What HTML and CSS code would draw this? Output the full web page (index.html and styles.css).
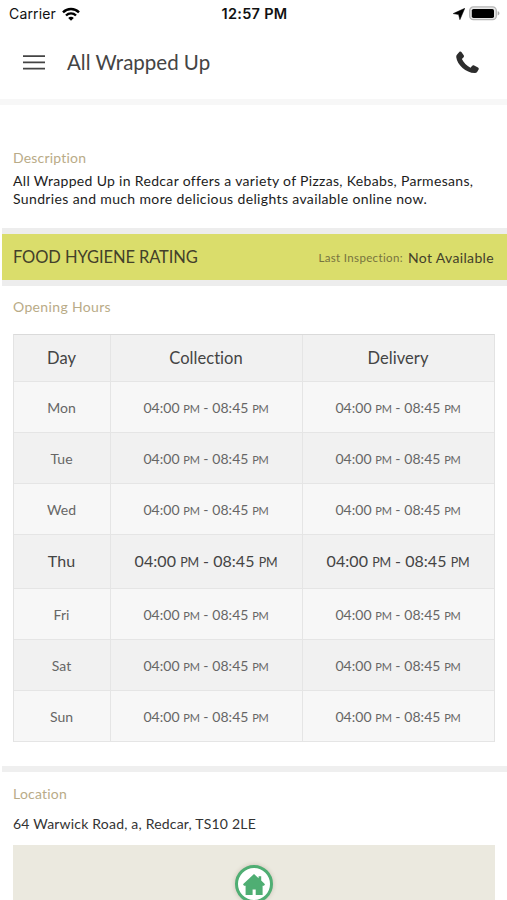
FILE: index.html
```html
<!DOCTYPE html>
<html lang="en">
<head>
<meta charset="utf-8">
<title>All Wrapped Up</title>
<link rel="stylesheet" href="styles.css">
</head>
<body>
<div class="status">
  <div class="carrier"><span>Carrier</span>
    <svg width="18" height="14" viewBox="0 0 18 14" fill="none" stroke="#000" stroke-width="2.4"><path d="M1 5.400C5.400.9 12.600.9 17 5.400M4 8.500c2.800-2.800 7.200-2.800 10 0"/><path d="M9 13.700 6.200 10.900c1.500-1.500 4.100-1.500 5.600 0z" fill="#000" stroke="none"/></svg>
  </div>
  <div class="clock">12:57 PM</div>
  <div class="indicators">
    <svg width="12" height="12" viewBox="0 0 12 12"><path d="M11.800.3 6.900 11.700 5.600 6.600.2 5.600z" stroke="#000" stroke-width=".5"/></svg>
    <svg width="31" height="15" viewBox="0 0 31 15"><rect x=".7" y=".9" width="26.600" height="12.800" rx="3.700" fill="#e8e8e8" stroke="#b5b5b5" stroke-width="1.300"/><rect x="2.800" y="2.900" width="22.200" height="9" rx="1.700"/><path d="M28.700 5.300c2.300.7 2.300 3.500 0 4.200z" fill="#aaa"/></svg>
  </div>
</div>
<header class="bar">
  <svg width="22" height="15" viewBox="0 0 22 15" stroke="#444" stroke-width="1.700"><path d="M0 1.200h22M0 7.400h22M0 13.600h22"/></svg>
  <h1>All Wrapped Up</h1>
  <svg class="phone" width="23" height="23" viewBox="0 0 23 23" fill="#2d2d2d"><path d="M1.300 3.200 3.500.8c.6-.6 1.400-.5 1.900.1l2.300 3.300c.5.700.4 1.500-.1 2.100L5.900 8.100c1.600 3.500 4.800 6.800 8.600 8.600l1.700-2c.5-.6 1.300-.7 2-.3l3.800 2c.8.5 1 1.200.6 2l-1.500 2.600c-.5.800-1.400 1.200-2.400 1.100C9.900 21.400 1.300 14.200.2 5.900.1 4.900.5 4 1.300 3.200z"/></svg>
</header>
<main>
  <section class="description">
    <h2>Description</h2>
    <p><span class="l1">All Wrapped Up in Redcar offers a variety of Pizzas, Kebabs, Parmesans,</span><br><span class="l2">Sundries and much more delicious delights available online now.</span></p>
  </section>
  <section class="hygiene">
    <span class="title">FOOD HYGIENE RATING</span>
    <span class="label">Last Inspection:</span>
    <span class="value">Not Available</span>
  </section>
  <section class="opening">
    <h2>Opening Hours</h2>
    <div class="hours">
      <div class="row head"><div>Day</div><div>Collection</div><div>Delivery</div></div>
      <div class="row"><div>Mon</div><div>04:00 <small>PM</small> - 08:45 <small>PM</small></div><div>04:00 <small>PM</small> - 08:45 <small>PM</small></div></div>
      <div class="row alt"><div>Tue</div><div>04:00 <small>PM</small> - 08:45 <small>PM</small></div><div>04:00 <small>PM</small> - 08:45 <small>PM</small></div></div>
      <div class="row"><div>Wed</div><div>04:00 <small>PM</small> - 08:45 <small>PM</small></div><div>04:00 <small>PM</small> - 08:45 <small>PM</small></div></div>
      <div class="row alt today"><div>Thu</div><div>04:00 <small>PM</small> - 08:45 <small>PM</small></div><div>04:00 <small>PM</small> - 08:45 <small>PM</small></div></div>
      <div class="row"><div>Fri</div><div>04:00 <small>PM</small> - 08:45 <small>PM</small></div><div>04:00 <small>PM</small> - 08:45 <small>PM</small></div></div>
      <div class="row alt"><div>Sat</div><div>04:00 <small>PM</small> - 08:45 <small>PM</small></div><div>04:00 <small>PM</small> - 08:45 <small>PM</small></div></div>
      <div class="row"><div>Sun</div><div>04:00 <small>PM</small> - 08:45 <small>PM</small></div><div>04:00 <small>PM</small> - 08:45 <small>PM</small></div></div>
    </div>
  </section>
  <section class="location">
    <h2>Location</h2>
    <address>64 Warwick Road, a, Redcar, TS10 2LE</address>
    <div class="map">
      <div class="pin"><svg width="22" height="21" viewBox="0 0 22 21" fill="#4fae73"><path d="M11 0 15.600 4.200V2.200h2.600v4.400L22 10.300 21 11.800H19.600V21h-6.900v-5.500H9.600V21H2.600v-9.200H1L0 10.300z"/></svg></div>
    </div>
  </section>
</main>
</body>
</html>
```

FILE: styles.css
```css
* { box-sizing: border-box; }
body {
  margin: 0;
  height: 900px;
  overflow: hidden;
  background: #fff;
  color: #222;
  font-family: Lato, "Liberation Sans", sans-serif;
  font-size: 14px;
}
h1, h2, p { margin: 0; font-weight: 400; }
svg { display: block; flex: none; }

.status {
  display: grid;
  grid-template-columns: 1fr auto 1fr;
  align-items: center;
  height: 27px;
  padding: 0 7px 0 9px;
  color: #111;
  font-family: Inter, sans-serif;
  font-size: 14px;
}
.carrier { display: flex; align-items: center; gap: 6px; letter-spacing: 0.15px; }
.clock { font-weight: 600; font-size: 14.5px; letter-spacing: 0.3px; }
.indicators { display: flex; justify-content: flex-end; align-items: center; gap: 4px; }

.bar {
  display: flex;
  align-items: center;
  height: 78px;
  padding: 0 28px 2px 23px;
  border: solid transparent;
  border-width: 0 0 6px;
  border-image: linear-gradient(to right, #fff 2px, #f7f7f7 2px) 6;
}
.bar h1 { margin-left: 22px; font-size: 20.5px; line-height: 26px; padding-bottom: 1px; color: #444; }
.phone { margin-left: auto; }

h2 { font-size: 14px; line-height: 18px; color: #b9ab87; letter-spacing: 0.2px; }
.description { height: 123px; padding: 44px 13px 0; }
.description p { margin-top: 5px; line-height: 18px; white-space: nowrap; color: #1c1c1c; }
.l1 { letter-spacing: 0.32px; }
.l2 { letter-spacing: 0.36px; }

.hygiene {
  display: flex;
  align-items: center;
  height: 58px;
  margin-left: 2px;
  padding: 0 13px 0 11px;
  border: solid #ededed;
  border-width: 6px 0;
  background: #dadd6b;
  color: #43402a;
}
.title { margin-right: auto; font-size: 16.5px; letter-spacing: -0.1px; }
.label { margin-right: 5px; font-size: 11.5px; color: #77733f; letter-spacing: 0.35px; }
.value { font-size: 14px; letter-spacing: 0.35px; }

.opening { height: 480px; padding: 12px 12px 0 13px; }
.opening h2 { letter-spacing: 0.35px; }
.hours { margin-top: 18px; border: 1px solid #e3e3e3; border-top-color: #dadada; border-bottom: 0; color: #666; }
.row { display: grid; grid-template-columns: 96px 192px 1fr; height: 51px; line-height: 51px; background: #f7f7f7; border-bottom: 1px solid #e5e5e5; }
.row > div { height: 100%; padding-right: 1px; overflow: hidden; text-align: center; white-space: nowrap; letter-spacing: 0.05px; }
.row > div + div { border-left: 1px solid #e5e5e5; }
.row small { font-size: 11px; line-height: 1; letter-spacing: -0.2px; }
.alt, .head { background: #f1f1f1; }
.row.head { height: 47px; line-height: 47px; font-size: 16.5px; color: #444; }
.row.today { height: 54px; line-height: 52px; font-size: 16px; color: #444; }
.row.today small { font-size: 12.5px; }

.location { margin-left: 2px; padding: 13px 12px 0 11px; border-top: 6px solid #efefef; }
address { margin-top: 12px; font-style: normal; line-height: 18px; color: #333; letter-spacing: 0.2px; }
.map { display: flex; justify-content: center; height: 100px; margin-top: 12px; padding-top: 20px; background: #ebe9df; }
.pin {
  display: flex;
  align-items: center;
  justify-content: center;
  width: 38px;
  height: 38px;
  border: 3px solid #4fae73;
  border-radius: 50%;
  background: #fff;
  box-shadow: 0 0 4px rgba(120, 90, 70, 0.3);
}
```
